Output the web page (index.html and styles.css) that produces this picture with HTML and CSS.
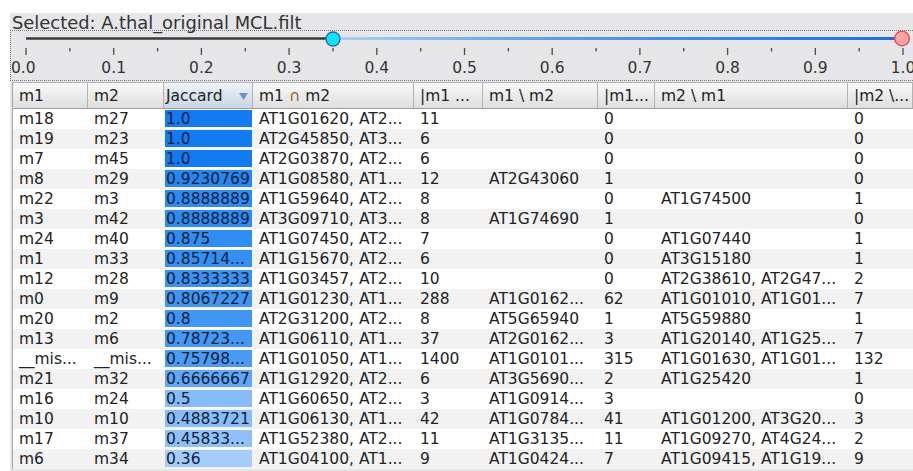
FILE: index.html
```html
<!DOCTYPE html>
<html>
<head>
<meta charset="utf-8">
<title>Module comparison</title>
<link rel="stylesheet" href="styles.css">
</head>
<body>
<div class="panel">
  <div class="caption">Selected: A.thal_original MCL.filt</div>
  <div class="slider">
    <svg class="slider-art" width="903" height="49" viewBox="11 31 903 49">
      <defs>
        <linearGradient id="range" x1="340" y1="0" x2="896" y2="0" gradientUnits="userSpaceOnUse">
          <stop offset="0" stop-color="#a8cff6"/>
          <stop offset="0.35" stop-color="#5aa2ee"/>
          <stop offset="1" stop-color="#1c6fde"/>
        </linearGradient>
      </defs>
      <!-- track: below the lower thumb, then the selected range -->
      <line x1="26" y1="38.5" x2="330" y2="38.5" stroke="#3a3a3a" stroke-width="2.4"/>
      <line x1="336" y1="38.5" x2="900" y2="38.5" stroke="url(#range)" stroke-width="3"/>
      <!-- major ticks every 0.1 -->
      <g stroke="#4a4a4a" stroke-width="1.3">
        <line x1="26" y1="48" x2="26" y2="55"/>
        <line x1="113.7" y1="48" x2="113.7" y2="55"/>
        <line x1="201.4" y1="48" x2="201.4" y2="55"/>
        <line x1="289.1" y1="48" x2="289.1" y2="55"/>
        <line x1="376.8" y1="48" x2="376.8" y2="55"/>
        <line x1="464.5" y1="48" x2="464.5" y2="55"/>
        <line x1="552.2" y1="48" x2="552.2" y2="55"/>
        <line x1="639.9" y1="48" x2="639.9" y2="55"/>
        <line x1="727.6" y1="48" x2="727.6" y2="55"/>
        <line x1="815.3" y1="48" x2="815.3" y2="55"/>
        <line x1="903" y1="48" x2="903" y2="55"/>
      </g>
      <!-- minor ticks every 0.05 -->
      <g stroke="#4a4a4a" stroke-width="1.3">
        <line x1="69.9" y1="48" x2="69.9" y2="51.5"/>
        <line x1="157.6" y1="48" x2="157.6" y2="51.5"/>
        <line x1="245.3" y1="48" x2="245.3" y2="51.5"/>
        <line x1="333" y1="48" x2="333" y2="51.5"/>
        <line x1="420.7" y1="48" x2="420.7" y2="51.5"/>
        <line x1="508.4" y1="48" x2="508.4" y2="51.5"/>
        <line x1="596.1" y1="48" x2="596.1" y2="51.5"/>
        <line x1="683.8" y1="48" x2="683.8" y2="51.5"/>
        <line x1="771.5" y1="48" x2="771.5" y2="51.5"/>
        <line x1="859.2" y1="48" x2="859.2" y2="51.5"/>
      </g>
      <g class="tick-labels">
        <text x="11" y="73" text-anchor="start">0.0</text>
        <text x="113.7" y="73">0.1</text>
        <text x="201.4" y="73">0.2</text>
        <text x="289.1" y="73">0.3</text>
        <text x="376.8" y="73">0.4</text>
        <text x="464.5" y="73">0.5</text>
        <text x="552.2" y="73">0.6</text>
        <text x="639.9" y="73">0.7</text>
        <text x="727.6" y="73">0.8</text>
        <text x="815.3" y="73">0.9</text>
        <text x="903" y="73">1.0</text>
      </g>
      <!-- thumbs -->
      <circle cx="333" cy="39" r="7" fill="#14e2fb" stroke="#2a68a6" stroke-width="1.3"/>
      <circle cx="902" cy="38.5" r="7.3" fill="#ffa3a3" stroke="#e04848" stroke-width="1.3"/>
    </svg>
  </div>

  <div class="tbl">
    <div class="hd">
      <span>m1</span>
      <span>m2</span>
      <span class="sorted"><span>Jaccard</span><svg class="arrow" width="9" height="7" viewBox="0 0 9 7"><polygon points="0,0 9,0 4.5,7" fill="#6f93c0"/></svg></span>
      <span>m1 <span class="cap">∩</span> m2</span>
      <span>|m1 ...</span>
      <span>m1 \ m2</span>
      <span>|m1...</span>
      <span>m2 \ m1</span>
      <span>|m2 \...</span>
    </div>

    <div class="row"><span>m18</span><span>m27</span><span class="jac"><span class="bar" style="background:rgb(18,123,242)">1.0</span></span><span>AT1G01620, AT2...</span><span>11</span><span></span><span>0</span><span></span><span>0</span></div>
    <div class="row alt"><span>m19</span><span>m23</span><span class="jac"><span class="bar" style="background:rgb(18,123,242)">1.0</span></span><span>AT2G45850, AT3...</span><span>6</span><span></span><span>0</span><span></span><span>0</span></div>
    <div class="row"><span>m7</span><span>m45</span><span class="jac"><span class="bar" style="background:rgb(18,123,242)">1.0</span></span><span>AT2G03870, AT2...</span><span>6</span><span></span><span>0</span><span></span><span>0</span></div>
    <div class="row alt"><span>m8</span><span>m29</span><span class="jac"><span class="bar" style="background:rgb(38,135,241)">0.9230769</span></span><span>AT1G08580, AT1...</span><span>12</span><span>AT2G43060</span><span>1</span><span></span><span>0</span></div>
    <div class="row"><span>m22</span><span>m3</span><span class="jac"><span class="bar" style="background:rgb(45,139,242)">0.8888889</span></span><span>AT1G59640, AT2...</span><span>8</span><span></span><span>0</span><span>AT1G74500</span><span>1</span></div>
    <div class="row alt"><span>m3</span><span>m42</span><span class="jac"><span class="bar" style="background:rgb(45,139,242)">0.8888889</span></span><span>AT3G09710, AT3...</span><span>8</span><span>AT1G74690</span><span>1</span><span></span><span>0</span></div>
    <div class="row"><span>m24</span><span>m40</span><span class="jac"><span class="bar" style="background:rgb(48,141,242)">0.875</span></span><span>AT1G07450, AT2...</span><span>7</span><span></span><span>0</span><span>AT1G07440</span><span>1</span></div>
    <div class="row alt"><span>m1</span><span>m33</span><span class="jac"><span class="bar" style="background:rgb(52,143,242)">0.85714...</span></span><span>AT1G15670, AT2...</span><span>6</span><span></span><span>0</span><span>AT3G15180</span><span>1</span></div>
    <div class="row"><span>m12</span><span>m28</span><span class="jac"><span class="bar" style="background:rgb(58,146,243)">0.8333333</span></span><span>AT1G03457, AT2...</span><span>10</span><span></span><span>0</span><span>AT2G38610, AT2G47...</span><span>2</span></div>
    <div class="row alt"><span>m0</span><span>m9</span><span class="jac"><span class="bar" style="background:rgb(64,149,243)">0.8067227</span></span><span>AT1G01230, AT1...</span><span>288</span><span>AT1G0162...</span><span>62</span><span>AT1G01010, AT1G01...</span><span>7</span></div>
    <div class="row"><span>m20</span><span>m2</span><span class="jac"><span class="bar" style="background:rgb(65,150,243)">0.8</span></span><span>AT2G31200, AT2...</span><span>8</span><span>AT5G65940</span><span>1</span><span>AT5G59880</span><span>1</span></div>
    <div class="row alt"><span>m13</span><span>m6</span><span class="jac"><span class="bar" style="background:rgb(68,152,243)">0.78723...</span></span><span>AT1G06110, AT1...</span><span>37</span><span>AT2G0162...</span><span>3</span><span>AT1G20140, AT1G25...</span><span>7</span></div>
    <div class="row"><span>__mis...</span><span>__mis...</span><span class="jac"><span class="bar" style="background:rgb(75,155,244)">0.75798...</span></span><span>AT1G01050, AT1...</span><span>1400</span><span>AT1G0101...</span><span>315</span><span>AT1G01630, AT1G01...</span><span>132</span></div>
    <div class="row alt"><span>m21</span><span>m32</span><span class="jac"><span class="bar" style="background:rgb(96,167,245)">0.6666667</span></span><span>AT1G12920, AT2...</span><span>6</span><span>AT3G5690...</span><span>2</span><span>AT1G25420</span><span>1</span></div>
    <div class="row"><span>m16</span><span>m24</span><span class="jac"><span class="bar" style="background:rgb(134,188,248)">0.5</span></span><span>AT1G60650, AT2...</span><span>3</span><span>AT1G0914...</span><span>3</span><span></span><span>0</span></div>
    <div class="row alt"><span>m10</span><span>m10</span><span class="jac"><span class="bar" style="background:rgb(136,189,248)">0.4883721</span></span><span>AT1G06130, AT1...</span><span>42</span><span>AT1G0784...</span><span>41</span><span>AT1G01200, AT3G20...</span><span>3</span></div>
    <div class="row"><span>m17</span><span>m37</span><span class="jac"><span class="bar" style="background:rgb(143,193,248)">0.45833...</span></span><span>AT1G52380, AT2...</span><span>11</span><span>AT1G3135...</span><span>11</span><span>AT1G09270, AT4G24...</span><span>2</span></div>
    <div class="row alt"><span>m6</span><span>m34</span><span class="jac"><span class="bar" style="background:rgb(165,205,250)">0.36</span></span><span>AT1G04100, AT1...</span><span>9</span><span>AT1G0424...</span><span>7</span><span>AT1G09415, AT1G19...</span><span>9</span></div>
  </div>
</div>
</body>
</html>
```
FILE: styles.css
```css
html, body {
  margin: 0;
  background: #ffffff;
  overflow: hidden;
}

body {
  font-family: "DejaVu Sans", "Noto Sans", sans-serif;
  font-size: 15.5px;
  color: #222222;
}

.panel {
  margin: 13px 0 0 10px;
  height: 458px;
  background: #e6e6e9;
}

.caption {
  height: 17px;
  line-height: 19px;
  padding-left: 2px;
  font-size: 17.9px;
  color: #333333;
  white-space: nowrap;
  overflow: visible;
}

/* range slider frame */
.slider {
  height: 49px;
  border: 1px dotted #7c7c7c;
  border-right: none;
}

.slider-art {
  display: block;
}

.tick-labels text {
  font-family: "DejaVu Sans", sans-serif;
  font-size: 15.5px;
  fill: #333333;
  text-anchor: middle;
}

.tick-labels text:first-child {
  text-anchor: start;
}

/* table */
.tbl {
  margin: 1px 0 0 2px;
  border-left: 1px solid #a4a4a4;
  background: #ffffff;
}

.hd,
.row {
  display: grid;
  grid-template-columns: 75px 76px 89px 161px 69px 115px 57px 193px 65px;
}

.hd > span {
  display: block;
  height: 25px;
  line-height: 26px;
  padding-left: 6px;
  border-top: 1px solid #b4b4b4;
  border-bottom: 1px solid #9c9c9c;
  border-right: 1px solid #b2b2b2;
  background: linear-gradient(#fbfbfb, #e9e9e9 55%, #dedede);
  white-space: nowrap;
  overflow: hidden;
}

.hd > span.sorted {
  display: flex;
  align-items: center;
  justify-content: space-between;
  padding-left: 2px;
  background: linear-gradient(#eef3f8, #d8e2ec 55%, #c9d6e3);
}

.arrow {
  margin-right: 4px;
  margin-top: 1px;
}

.cap {
  color: #9a5a2a;
}

.row {
  height: 20px;
  line-height: 21px;
}

.row.alt {
  background: #f2f2f2;
}

.row > span {
  padding-left: 6px;
  white-space: nowrap;
  overflow: hidden;
}

.row > span.jac {
  padding: 1px 1px 2px 1px;
}

.bar {
  display: block;
  height: 17px;
  line-height: 19px;
  padding-left: 1px;
  color: #10213a;
  overflow: hidden;
}
```
